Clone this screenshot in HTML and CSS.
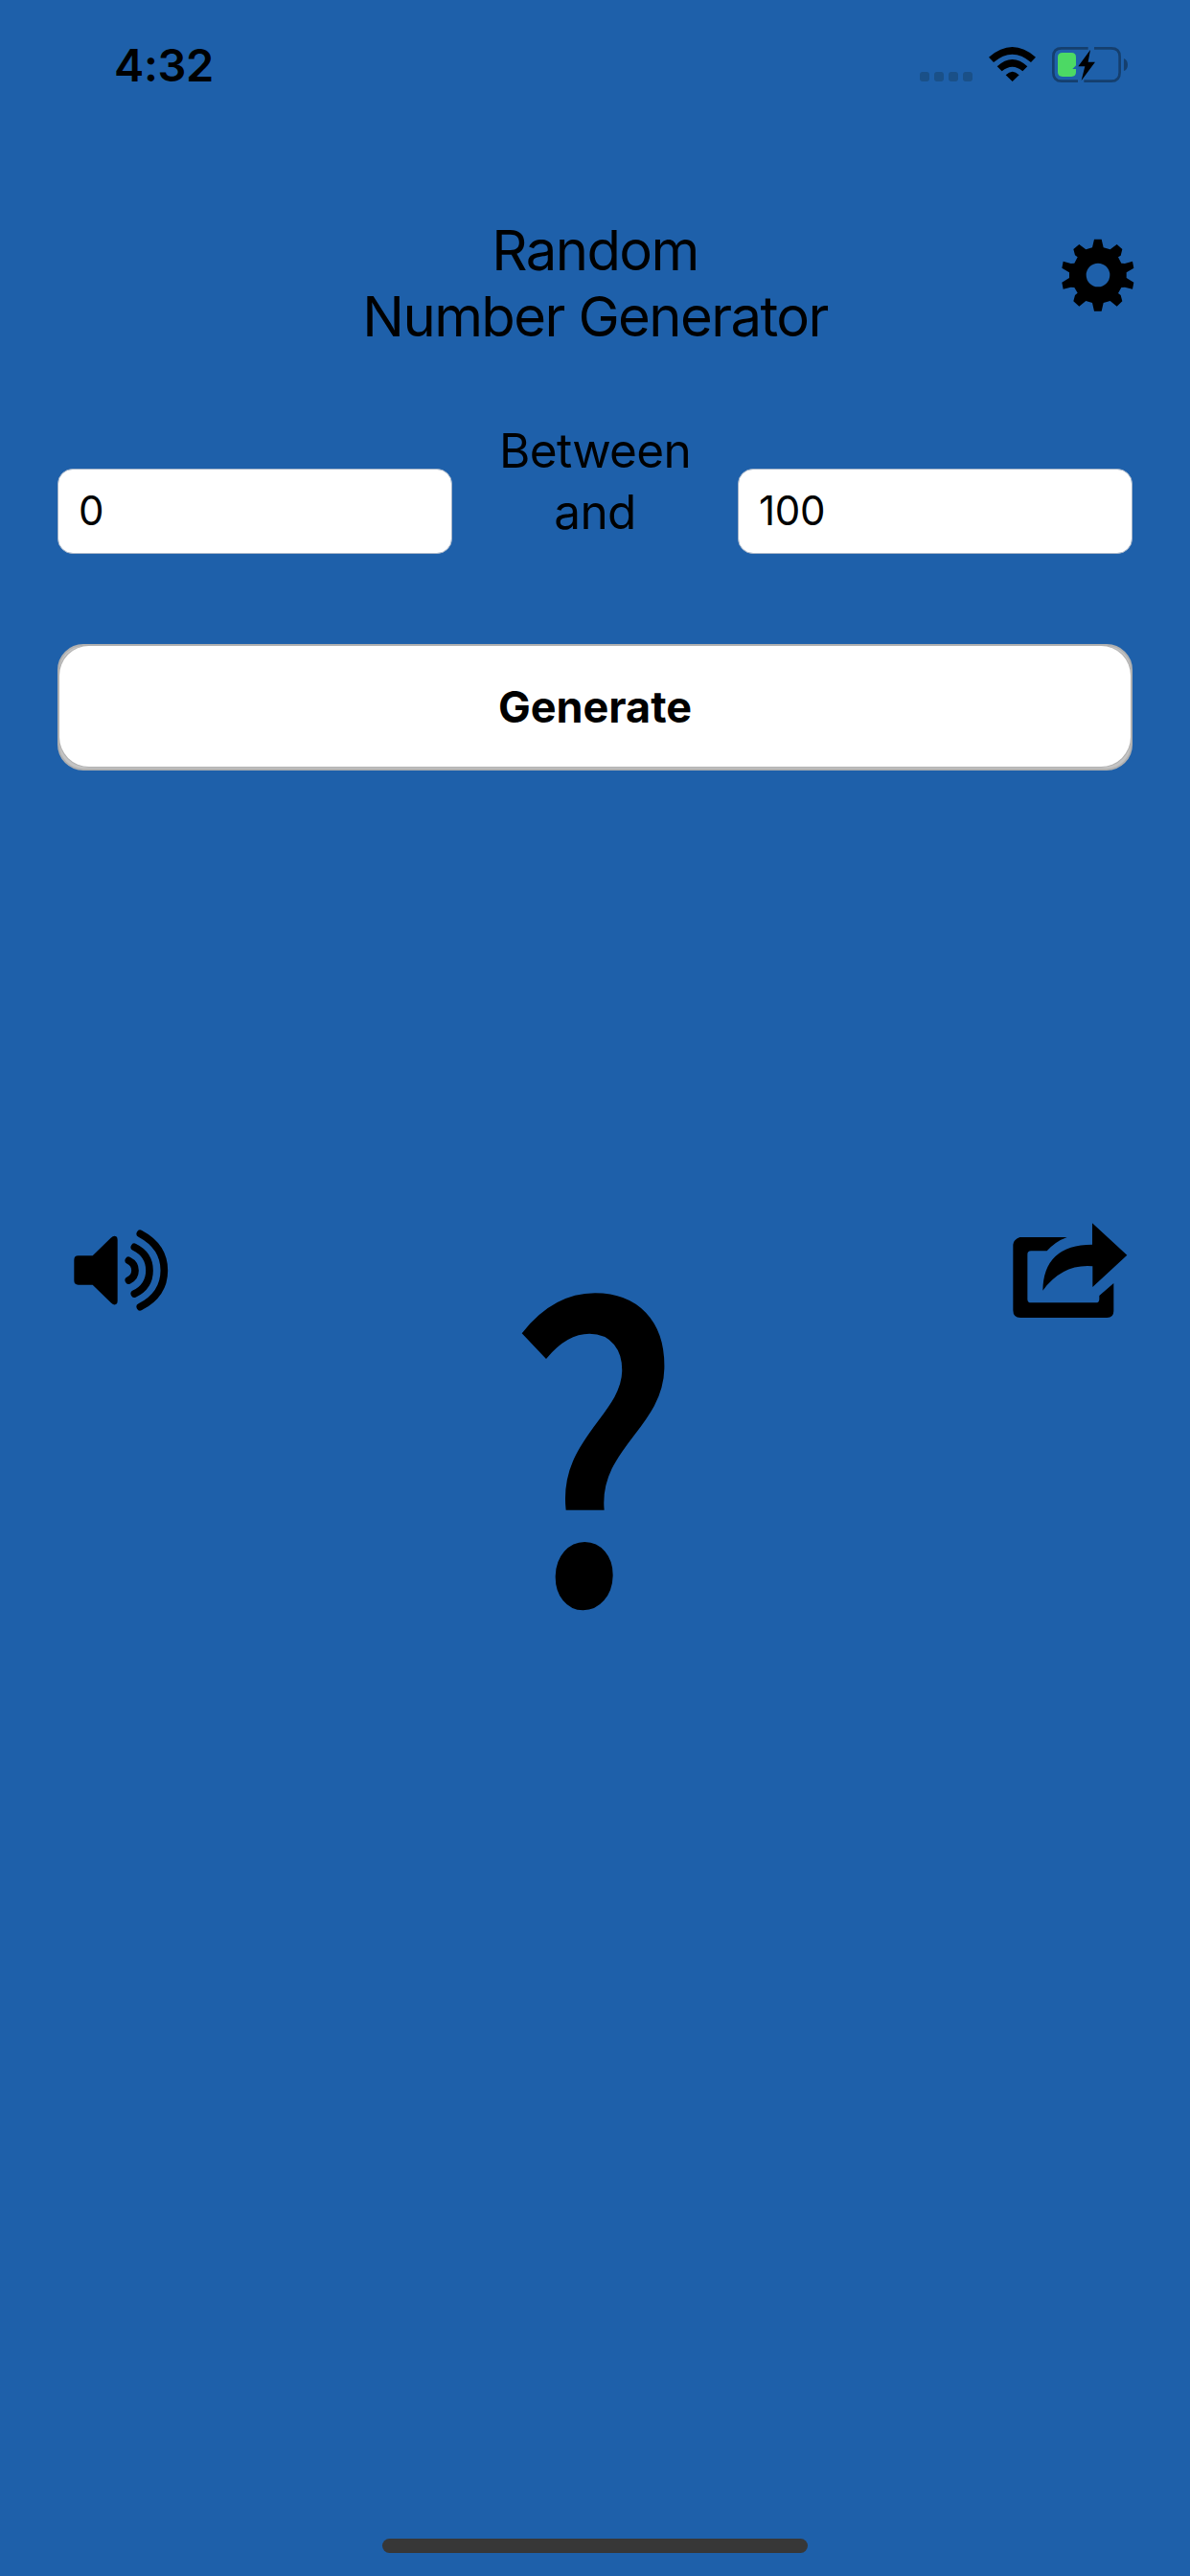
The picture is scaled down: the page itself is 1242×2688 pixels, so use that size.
FILE: index.html
```html
<!DOCTYPE html>
<html lang="en">
<head>
<meta charset="utf-8">
<title>Random Number Generator</title>
<link rel="stylesheet" href="styles.css">
</head>
<body>
<div class="status">
  <span class="time">4:32</span>
  <div class="status-icons">
    <div class="signal"><i></i><i></i><i></i><i></i></div>
    <svg class="wifi" viewBox="276 87 147 109">
      <path d="M276 119Q350 55 423 119L408 135Q350 85 291 135Z"/>
      <path d="M302 148Q350 104 397 148L382 163Q350 135 317 163Z"/>
      <path d="M329 175Q350 153 371 175L350 195Z"/>
    </svg>
    <svg class="battery" viewBox="474 84 238 116">
      <g fill="none" stroke="#153f6e" stroke-width="8">
        <path d="M587 91H504Q478 91 478 117V167Q478 194 504 194H555"/>
        <path d="M606 91H659Q686 91 686 117V167Q686 194 659 194H574"/>
      </g>
      <path fill="#153f6e" d="M699 123Q711 128 711 143T699 162Z"/>
      <path fill="#4cd964" d="M507 105H535Q549 105 549 119V145L538 156H549V166Q549 180 535 180H507Q492 180 492 166V119Q492 105 507 105Z"/>
      <path d="M594 96L556 148H577L566 192L609 134H587Z"/>
    </svg>
  </div>
</div>
<header class="header">
  <h1>Random<br>Number Generator</h1>
  <svg class="gear" viewBox="53 58 228 228">
    <path fill-rule="evenodd" d="M155 60H178L184 86L205 92L226 76L243 91L238 111L230 116L240 135L251 136L275 129L279 150L256 164V181L279 195L275 216L251 210L240 211L230 229L238 235L243 254L226 270L205 253L184 259L178 285H155L149 259L129 253L108 270L90 254L95 235L103 228L93 211L82 210L58 216L54 195L77 181V164L54 150L58 129L82 136L93 135L103 116L95 110L90 91L108 76L129 92L149 86ZM167 135A37 37 0 1 0 167 209A37 37 0 1 0 167 135Z"/>
  </svg>
</header>
<main>
  <div class="range">
    <input class="field" type="text" value="0" aria-label="Minimum">
    <p class="between">Between<br>and</p>
    <input class="field" type="text" value="100" aria-label="Maximum">
  </div>
  <button class="generate"><span>Generate</span></button>
  <div class="result">
    <svg class="sound" viewBox="50 70 297 255">
      <path d="M64 152H109L166 96Q176 87 183 92Q187 95 187 102V294Q187 302 182 304Q174 308 166 299L109 243H64Q51 243 51 230V165Q51 152 64 152Z"/>
      <path fill="none" stroke="#000" stroke-width="23" stroke-linecap="round" d="M222 167Q242 177 242 198T222 229M240 125Q287 148 287 198T240 271M258 83Q333 123 333 198T258 312"/>
    </svg>
    <div class="value">?</div>
    <svg class="share" viewBox="48 47 360 298">
      <path d="M70 92H218Q182 105 155 135H105Q94 135 94 146V286Q94 297 105 297H308Q319 297 319 286V275L364 236V323Q364 344 343 344H72Q49 344 49 321V115Q49 101 70 92Z"/>
      <path d="M297 48L406 148L298 248V183Q204 175 142 259Q144 116 297 115Z"/>
    </svg>
  </div>
</main>
<div class="home"></div>
</body>
</html>
```
FILE: styles.css
```css
* { box-sizing: border-box; }
body {
  margin: 0;
  height: 2688px;
  display: flex;
  flex-direction: column;
  background: #1e60aa;
  color: #000;
  font-family: Inter, sans-serif;
  overflow: hidden;
}
svg { display: block; flex: none; }
.status {
  height: 132px;
  padding: 0 65px 0 119px;
  display: flex;
  justify-content: space-between;
}
.time {
  padding-top: 38px;
  font-size: 47px;
  line-height: 60px;
  font-weight: 600;
  letter-spacing: -0.4px;
}
.status-icons { display: flex; padding-top: 48px; }
.signal { display: flex; gap: 5px; padding-top: 27px; margin-right: 17px; }
.signal i { width: 10px; height: 10px; border-radius: 3px; background: #1a5088; }
.wifi { width: 49px; height: 36.3px; margin: 1px 17px 0 0; }
.battery { width: 79.3px; height: 38.7px; }
.header {
  height: 306px;
  padding: 95px 58px 0;
  display: grid;
  grid-template-columns: 78px 1fr 78px;
}
h1 {
  grid-column: 2;
  margin: 0;
  font-size: 58px;
  line-height: 69px;
  font-weight: 400;
  letter-spacing: -1.6px;
  text-align: center;
}
.gear { width: 76px; height: 76px; margin-top: 22px; justify-self: end; }
main { padding: 0 60px; }
.range {
  height: 234px;
  display: flex;
  justify-content: space-between;
}
.field {
  width: 412px;
  height: 89px;
  margin: 51px 0 0;
  padding: 0 21px 3px;
  border: 1px solid #a5b4c8;
  border-radius: 16px;
  background: #fff;
  color: #000;
  font: 400 42px Inter, sans-serif;
  letter-spacing: -0.3px;
}
.between {
  margin: 0;
  font-size: 49.5px;
  line-height: 64px;
  letter-spacing: -0.7px;
  text-align: center;
}
.generate {
  display: block;
  width: 1122px;
  height: 132px;
  margin: 0;
  padding: 0 0 3px;
  border: 2px solid #b0b0b0;
  border-radius: 27px;
  background: #c4c4c4;
  color: #000;
  font: 700 45px Inter, sans-serif;
}
.generate span {
  display: flex;
  align-items: center;
  justify-content: center;
  height: 126px;
  border-radius: 31px;
  background: #fff;
  box-shadow: 0 0 0 1px #b0b0b0;
}
.result {
  height: 1000px;
  padding: 472px 5px 0 17px;
  display: flex;
  justify-content: space-between;
  align-items: flex-start;
}
.sound { width: 99px; height: 85px; margin-top: 7px; }
.share { width: 120px; height: 99.3px; }
.value {
  width: 200px;
  height: 420px;
  margin: 4px 2px 0 0;
  font: 500 420px/420px "Noto Sans CJK SC", sans-serif;
  text-align: center;
  -webkit-text-stroke: 3px #000;
  transform: scaleX(.88) skewX(-1.5deg);
}
.home {
  width: 444px;
  height: 15px;
  margin: auto auto 24px;
  border-radius: 8px;
  background: #373737;
}
```
